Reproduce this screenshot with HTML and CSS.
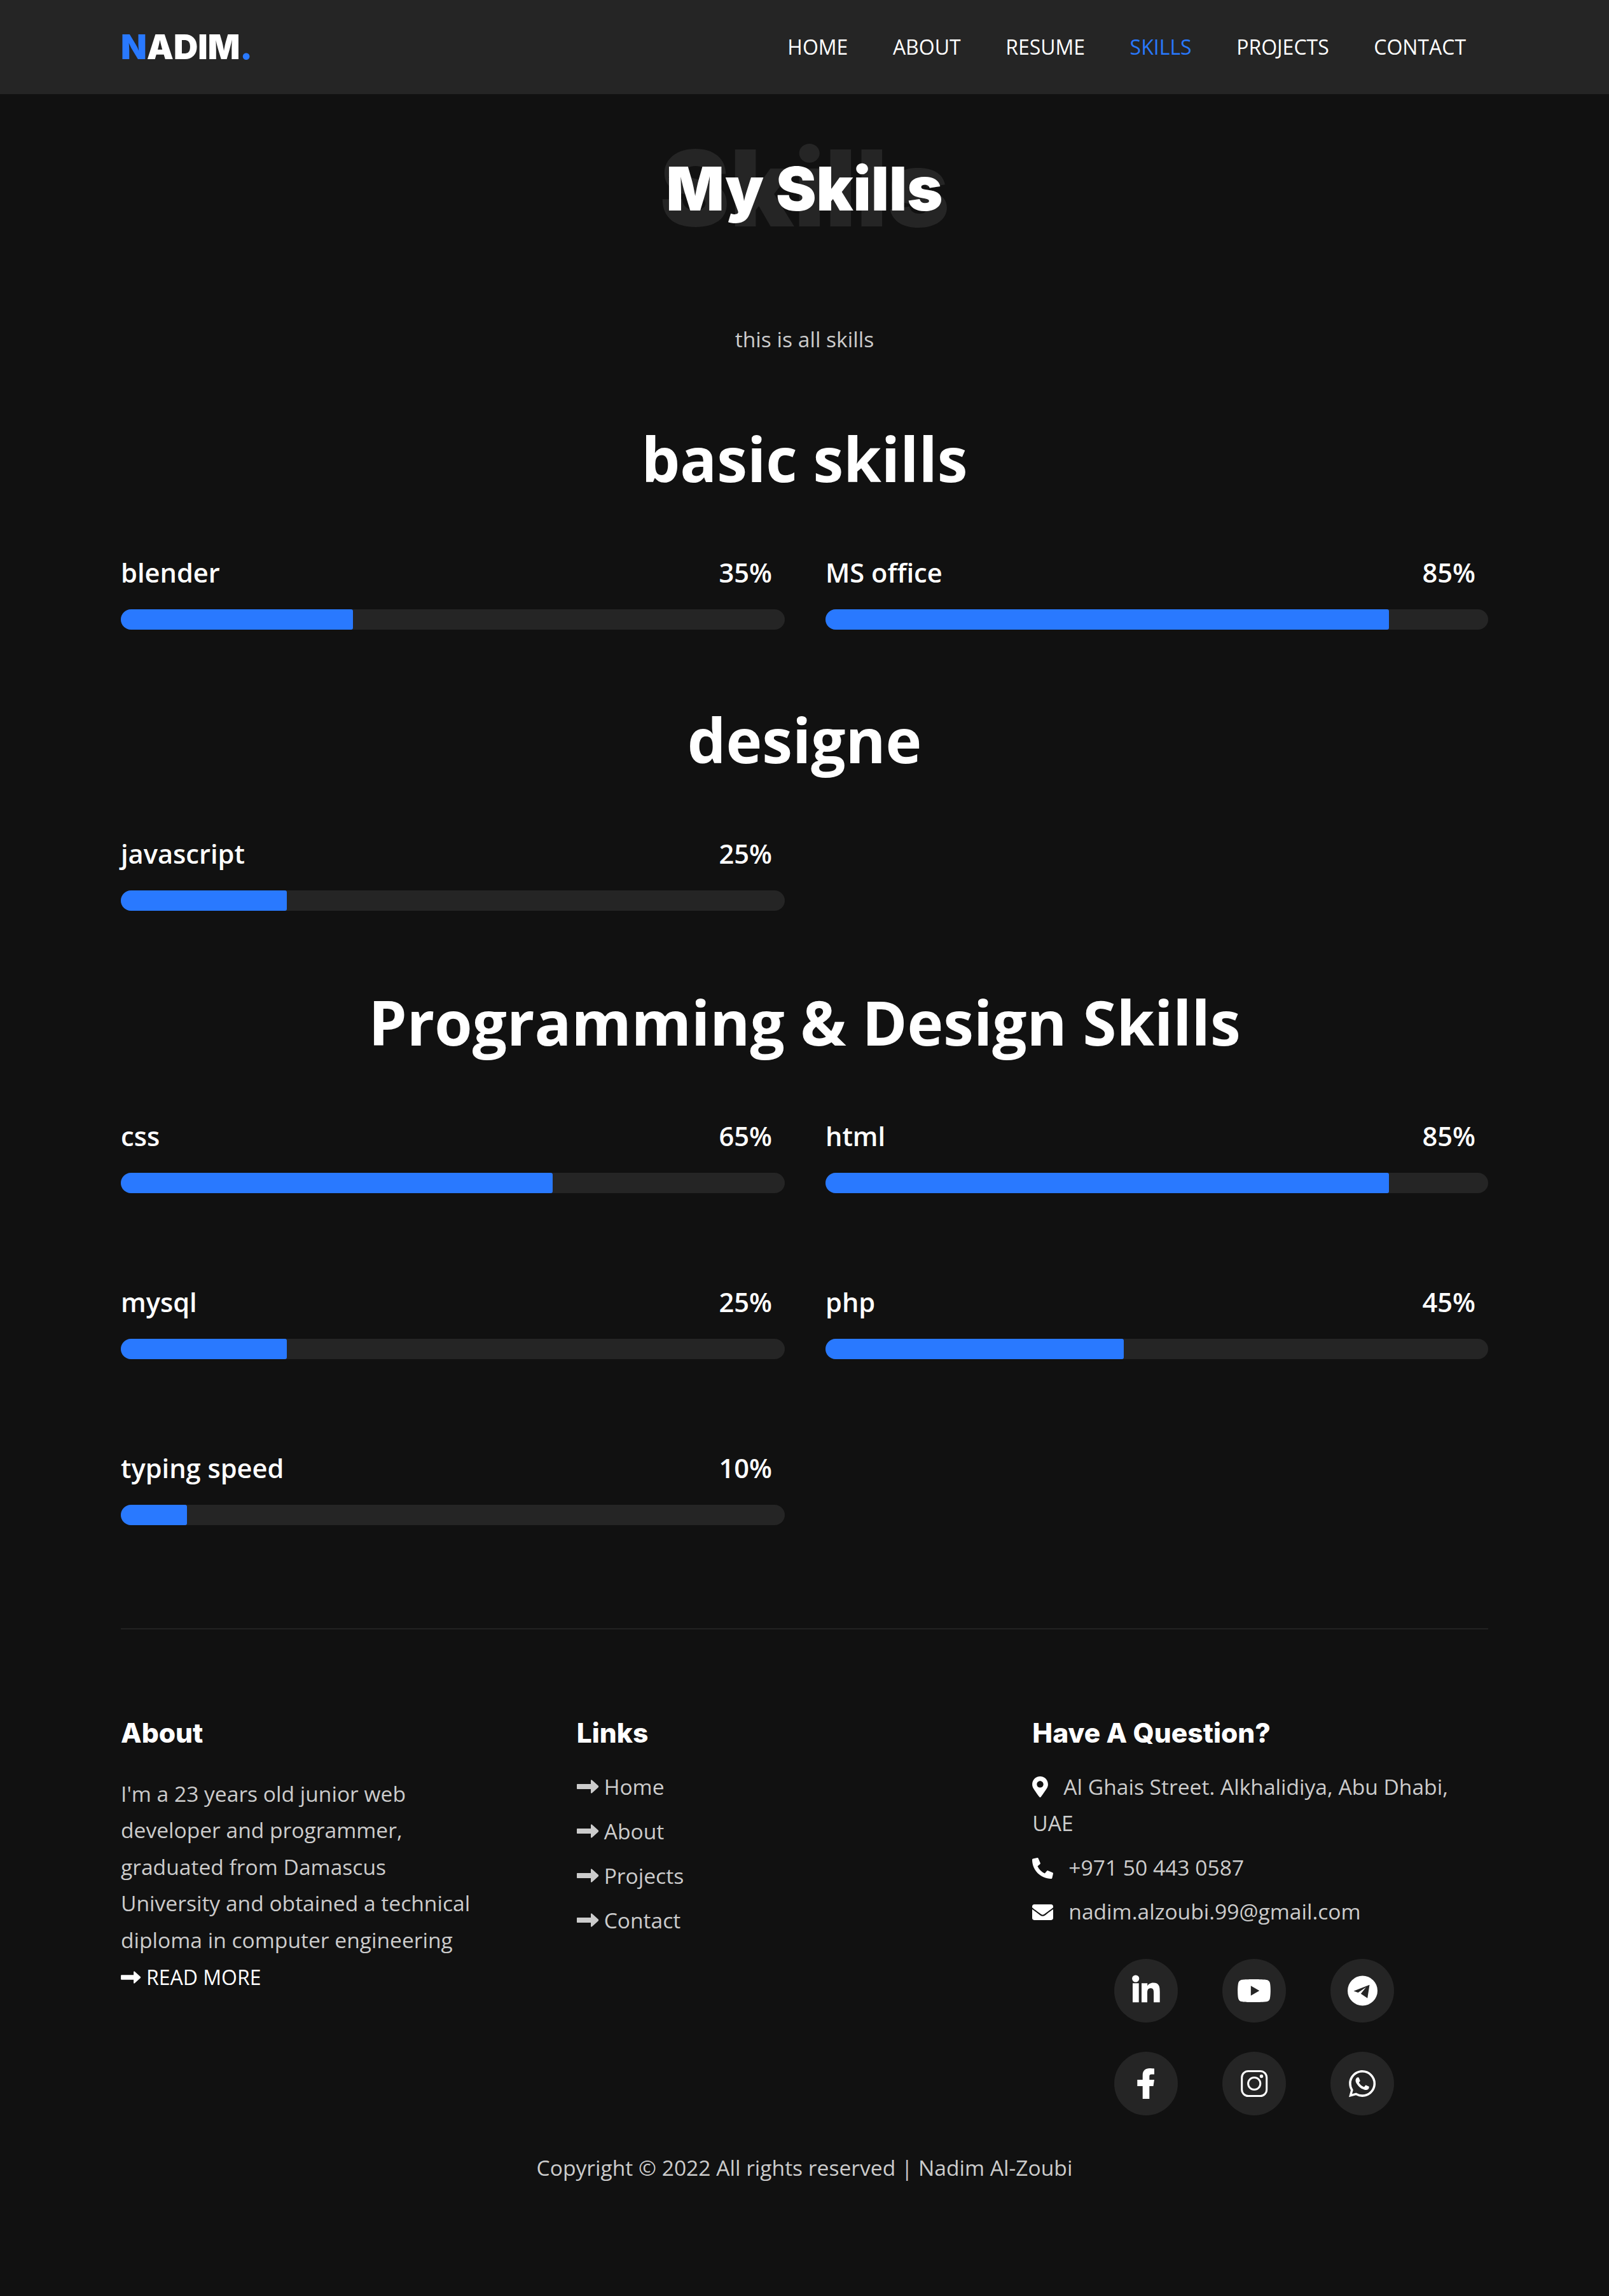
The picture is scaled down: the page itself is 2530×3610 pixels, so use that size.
FILE: index.html
```html
<!DOCTYPE html>
<html>
<head>
    <title>Nadim - Skills</title>
    <meta charset="utf-8">
    <link rel="stylesheet" href="styles.css">
</head>
<body>
<svg class="sprites" xmlns="http://www.w3.org/2000/svg">
    <symbol id="arrow" viewBox="0 0 35 22"><path d="M1 7h21V1.5c0-1 1-1.4 1.8-.7l10 9c.5.5.5 1.9 0 2.4l-10 9c-.8.7-1.8.3-1.8-.7V15H1c-.6 0-1-.4-1-1V8c0-.6.4-1 1-1z"/></symbol>
</svg>

<header class="topbar">
    <div class="wrap topbar-inner">
        <a class="logo"><span class="accent">N</span>ADIM<span class="accent">.</span></a>
        <nav class="nav">
            <a>HOME</a>
            <a>ABOUT</a>
            <a>RESUME</a>
            <a class="active">SKILLS</a>
            <a>PROJECTS</a>
            <a>CONTACT</a>
        </nav>
    </div>
</header>

<main class="wrap">
    <div class="page-title">
        <span class="page-title-back">Skills</span>
        <h1>My Skills</h1>
    </div>
    <p class="page-sub">this is all skills</p>

    <h2 class="group-title">basic skills</h2>
    <div class="skills">
        <div class="skill">
            <div class="skill-head"><span>blender</span><span>35%</span></div>
            <div class="bar"><div class="bar-fill" style="width: 35%"></div></div>
        </div>
        <div class="skill">
            <div class="skill-head"><span>MS office</span><span>85%</span></div>
            <div class="bar"><div class="bar-fill" style="width: 85%"></div></div>
        </div>
    </div>

    <h2 class="group-title">designe</h2>
    <div class="skills">
        <div class="skill">
            <div class="skill-head"><span>javascript</span><span>25%</span></div>
            <div class="bar"><div class="bar-fill" style="width: 25%"></div></div>
        </div>
    </div>

    <h2 class="group-title group-title-last">Programming &amp; Design Skills</h2>
    <div class="skills">
        <div class="skill">
            <div class="skill-head"><span>css</span><span>65%</span></div>
            <div class="bar"><div class="bar-fill" style="width: 65%"></div></div>
        </div>
        <div class="skill">
            <div class="skill-head"><span>html</span><span>85%</span></div>
            <div class="bar"><div class="bar-fill" style="width: 85%"></div></div>
        </div>
        <div class="skill">
            <div class="skill-head"><span>mysql</span><span>25%</span></div>
            <div class="bar"><div class="bar-fill" style="width: 25%"></div></div>
        </div>
        <div class="skill">
            <div class="skill-head"><span>php</span><span>45%</span></div>
            <div class="bar"><div class="bar-fill" style="width: 45%"></div></div>
        </div>
        <div class="skill">
            <div class="skill-head"><span>typing speed</span><span>10%</span></div>
            <div class="bar"><div class="bar-fill" style="width: 10%"></div></div>
        </div>
    </div>
</main>

<footer class="wrap footer">
    <div class="footer-cols">
        <div>
            <h3>About</h3>
            <p class="about-text">I'm a 23 years old junior web developer and programmer, graduated from Damascus University and obtained a technical diploma in computer engineering</p>
            <a class="read-more"><svg class="arrow"><use href="#arrow"/></svg>READ MORE</a>
        </div>
        <div>
            <h3>Links</h3>
            <ul class="links">
                <li><svg class="arrow"><use href="#arrow"/></svg>Home</li>
                <li><svg class="arrow"><use href="#arrow"/></svg>About</li>
                <li><svg class="arrow"><use href="#arrow"/></svg>Projects</li>
                <li><svg class="arrow"><use href="#arrow"/></svg>Contact</li>
            </ul>
        </div>
        <div>
            <h3>Have A Question?</h3>
            <ul class="contact">
                <li><svg class="pin" viewBox="0 0 384 512"><path d="M172.268 501.67C26.97 291.031 0 269.413 0 192 0 85.961 85.961 0 192 0s192 85.961 192 192c0 77.413-26.97 99.031-172.268 309.67-9.535 13.774-29.93 13.773-39.464 0zM192 272c44.183 0 80-35.817 80-80s-35.817-80-80-80-80 35.817-80 80 35.817 80 80 80z"/></svg>Al Ghais Street. Alkhalidiya, Abu Dhabi, UAE</li>
                <li><svg class="cicon" viewBox="0 0 512 512"><path d="M497.39 361.8l-112-48a24 24 0 0 0-28 6.9l-49.6 60.6A370.66 370.66 0 0 1 130.6 204.11l60.6-49.6a23.94 23.94 0 0 0 6.9-28l-48-112A24.16 24.16 0 0 0 122.6.61l-104 24A24 24 0 0 0 0 48c0 256.5 207.9 464 464 464a24 24 0 0 0 23.4-18.6l24-104a24.29 24.29 0 0 0-14.01-27.6z"/></svg>+971 50 443 0587</li>
                <li><svg class="cicon" viewBox="0 0 512 512"><path d="M502.3 190.8c3.9-3.1 9.7-.2 9.7 4.7V400c0 26.5-21.5 48-48 48H48c-26.5 0-48-21.5-48-48V195.6c0-5 5.7-7.8 9.7-4.7 22.4 17.4 52.1 39.5 154.1 113.6 21.1 15.4 56.7 47.8 92.2 47.6 35.7.3 72-32.8 92.3-47.6 102-74.1 131.6-96.3 154-113.7zM256 320c23.2.4 56.6-29.2 73.4-41.4 132.7-96.3 142.8-104.7 173.4-128.7 5.8-4.5 9.2-11.5 9.2-18.9v-19c0-26.5-21.5-48-48-48H48C21.5 64 0 85.5 0 112v19c0 7.4 3.4 14.3 9.2 18.9 30.6 23.9 40.7 32.4 173.4 128.7 16.8 12.2 50.2 41.8 73.4 41.4z"/></svg>nadim.alzoubi.99@gmail.com</li>
            </ul>
            <div class="socials">
                <a class="social">
                    <svg viewBox="0 0 100 100"><circle cx="33.7" cy="31" r="5.6"/><path d="M29 38.3h9.7v30H29zM43 38.3h9.2v4.2c1.4-2.6 4.5-5 9.2-5 9.6 0 10.3 6.3 10.3 14.5v16.3h-9.6V53.8c0-3.4-.1-7.8-4.7-7.8-4.7 0-5.4 3.7-5.4 7.5v14.8H43z"/></svg>
                </a>
                <a class="social">
                    <svg class="yt" viewBox="0 0 24 24"><path d="M21.593 7.203a2.506 2.506 0 0 0-1.762-1.766C18.265 5.007 12 5 12 5s-6.264-.007-7.831.404a2.56 2.56 0 0 0-1.766 1.778c-.413 1.566-.417 4.814-.417 4.814s-.004 3.264.406 4.814c.23.857.905 1.534 1.763 1.765 1.582.43 7.83.437 7.83.437s6.265.007 7.831-.403a2.515 2.515 0 0 0 1.767-1.763c.414-1.565.417-4.812.417-4.812s.02-3.265-.407-4.831zM9.996 15.005l.005-6 5.207 3.005-5.212 2.995z"/></svg>
                </a>
                <a class="social">
                    <svg viewBox="0 0 100 100"><circle cx="50.5" cy="50" r="23.5"/><path class="cut" d="M61.5 40.7 36.5 50.4l7 2.6 12.5-8.5-8.2 10.3 10.4 7z"/></svg>
                </a>
                <a class="social">
                    <svg viewBox="0 0 100 100"><path d="M44.7 74V54h-8.4V44h8.4v-7c0-7.5 4.3-11 10.8-11 3 0 5.5.2 7.5.5v9h-4.5c-2.7 0-3.2 1.5-3.2 3.5v5H63l-1.5 10h-6.2v20z"/></svg>
                </a>
                <a class="social">
                    <svg viewBox="0 0 100 100"><rect class="line" x="30.7" y="30.5" width="39" height="39" rx="10"/><circle class="line" cx="50.2" cy="50" r="9.6"/><circle cx="61.5" cy="38.5" r="2.7"/></svg>
                </a>
                <a class="social">
                    <svg class="wa" viewBox="0 0 24 24"><path d="M18.403 5.633A8.919 8.919 0 0 0 12.053 3c-4.948 0-8.976 4.027-8.978 8.977 0 1.582.413 3.126 1.198 4.488L3 21.116l4.759-1.249a8.981 8.981 0 0 0 4.29 1.093h.004c4.947 0 8.975-4.027 8.977-8.977a8.926 8.926 0 0 0-2.627-6.35m-6.35 13.812h-.003a7.446 7.446 0 0 1-3.798-1.041l-.272-.162-2.824.741.753-2.753-.177-.282a7.448 7.448 0 0 1-1.141-3.971c.002-4.114 3.349-7.461 7.465-7.461a7.413 7.413 0 0 1 5.275 2.188 7.42 7.42 0 0 1 2.183 5.279c-.002 4.114-3.349 7.462-7.461 7.462m4.093-5.589c-.225-.113-1.327-.655-1.533-.73-.205-.075-.354-.112-.504.112s-.58.729-.711.879-.262.168-.486.056-.947-.349-1.804-1.113c-.667-.595-1.117-1.329-1.248-1.554s-.014-.346.099-.458c.101-.1.224-.262.336-.393.112-.131.149-.224.224-.374s.038-.281-.019-.393c-.056-.113-.505-1.217-.692-1.666-.181-.435-.366-.377-.504-.383a9.65 9.65 0 0 0-.429-.008.826.826 0 0 0-.599.28c-.206.225-.785.767-.785 1.871s.804 2.171.916 2.321c.112.15 1.582 2.415 3.832 3.387.536.231.954.369 1.279.473.537.171 1.026.146 1.413.089.431-.064 1.327-.542 1.514-1.066.187-.524.187-.973.131-1.067-.056-.094-.207-.151-.43-.263"/></svg>
                </a>
            </div>
        </div>
    </div>
    <p class="copyright">Copyright © 2022 All rights reserved | Nadim Al-Zoubi</p>
</footer>
</body>
</html>
```

FILE: styles.css
```css
body {
    margin: 0;
    background: #111111;
    color: #cccccc;
    font: 33.6px/57.6px "Open Sans", "Liberation Sans", sans-serif;
}

a {
    color: inherit;
    text-decoration: none;
}

ul {
    list-style: none;
    margin: 0;
    padding: 0;
}

.sprites {
    display: none;
}

.wrap {
    width: 2150px;
    margin: 0 auto;
}

.accent {
    color: #2979ff;
}

/* top bar */
.topbar {
    background: #252525;
    height: 148px;
}

.topbar-inner {
    display: flex;
    justify-content: space-between;
    align-items: center;
    height: 100%;
}

.logo {
    font: 900 53px/1 Inter, sans-serif;
    color: #fff;
}

.nav {
    display: flex;
    gap: 0.5px;
}

.nav a {
    padding: 0 35px;
    color: #fff;
    font-size: 32px;
}

.nav a.active {
    color: #2979ff;
}

/* page heading */
.page-title {
    position: relative;
    margin-top: 100px;
    text-align: center;
}

.page-title h1 {
    position: relative;
    margin: 0;
    font: 900 95.5px/96px Inter, sans-serif;
    color: #fff;
}

.page-title-back {
    position: absolute;
    top: -35px;
    left: 0;
    right: 0;
    font: 900 166px/166px Inter, sans-serif;
    color: #252525;
}

.page-sub {
    margin: 161px 0 0;
    text-align: center;
}

/* skills */
.group-title {
    margin: 103px 0 73px;
    font-size: 96px;
    font-weight: 700;
    line-height: 140px;
    text-align: center;
    color: #fff;
}

.page-sub + .group-title {
    margin-top: 88px;
}

.group-title-last {
    margin-top: 105px;
}

.skills {
    display: grid;
    grid-template-columns: 1044px 1042px;
    column-gap: 64px;
    row-gap: 135px;
}

.skill-head {
    display: flex;
    justify-content: space-between;
    padding-right: 20px;
    margin-bottom: 22px;
    font-size: 41.6px;
    font-weight: 600;
    line-height: 72px;
    color: #fff;
}

.bar {
    height: 32px;
    background: #252525;
    border-radius: 16px;
    overflow: hidden;
}

.bar-fill {
    height: 100%;
    background: #2979ff;
    border-radius: 0 3px 3px 0;
}

/* footer */
.footer {
    margin-top: 162px;
    border-top: 2px solid #222222;
    padding: 133px 0 172px;
}

.footer-cols {
    display: grid;
    grid-template-columns: repeat(3, 1fr);
}

.footer h3 {
    margin: 0 0 26px;
    font: 800 42.5px/60px Inter, sans-serif;
    color: #fff;
}

.about-text {
    width: 555px;
    margin: 37px 0 0;
}

.read-more {
    color: #fff;
    font-size: 32px;
}

.read-more .arrow {
    width: 32px;
    height: 20px;
    margin-right: 8px;
}

.arrow {
    width: 35px;
    height: 22px;
    fill: currentColor;
    margin-right: 8px;
    vertical-align: 2px;
}

.links li {
    margin-bottom: 12.4px;
}

.contact {
    width: 680px;
}

.contact li {
    margin-bottom: 12px;
}

.pin {
    width: 25px;
    height: 33px;
    fill: #fff;
    margin-right: 24px;
    vertical-align: -4px;
}

.cicon {
    width: 33px;
    height: 33px;
    fill: #fff;
    margin-right: 24px;
    vertical-align: -5px;
}

.socials {
    display: flex;
    flex-wrap: wrap;
    gap: 46px 70px;
    width: 440px;
    margin: 45px 0 0 129px;
}

.social {
    display: flex;
    align-items: center;
    justify-content: center;
    width: 100px;
    height: 100px;
    border-radius: 50%;
    background: #252525;
}

.social svg {
    width: 100px;
    height: 100px;
    fill: #fff;
}

.social svg.yt {
    width: 62px;
    height: 62px;
}

.social svg.wa {
    width: 56px;
    height: 56px;
}

.social .cut {
    fill: #252525;
}

.social .line {
    fill: none;
    stroke: #fff;
    stroke-width: 3;
}

.copyright {
    margin: 54px 0 0;
    text-align: center;
}
```
